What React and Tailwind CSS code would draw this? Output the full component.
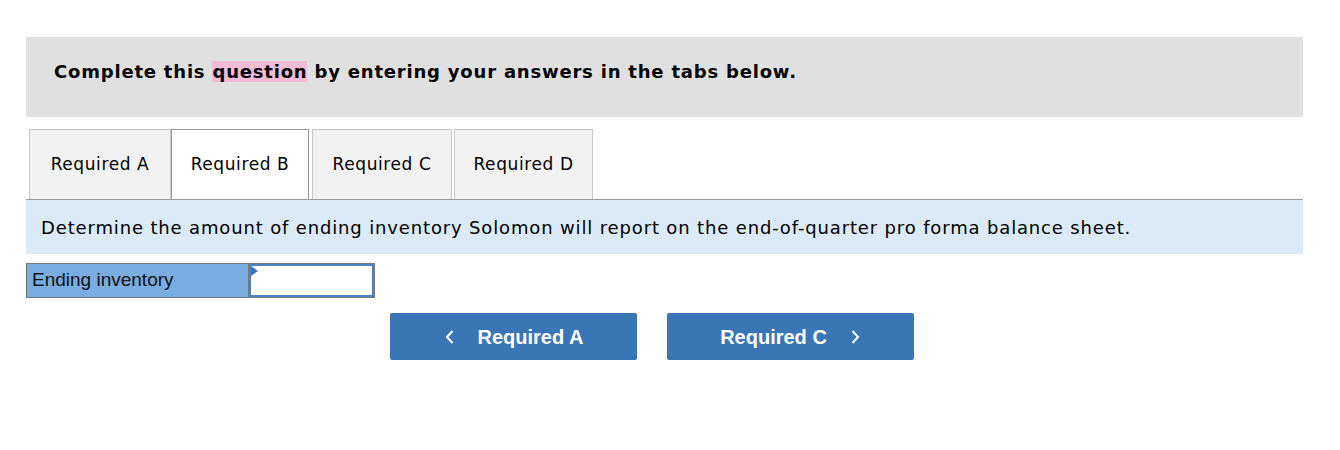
export default function App() {
  const tabs = [
    { label: 'Required A', cls: 'w-[142px] mr-0' },
    { label: 'Required B', cls: 'w-[138px] mr-[3px]' },
    { label: 'Required C', cls: 'w-[140px] mr-[2px]' },
    { label: 'Required D', cls: 'w-[139px] mr-0' },
  ];

  return (
    <div className="w-[1340px] h-[450px] bg-white pt-[37px] pl-[26px] pr-[37px] font-['DejaVu_Sans',Verdana,sans-serif]">
      {/* Instruction banner */}
      <div className="h-[80px] bg-[#e0e0e0] flex items-center pl-[28px] pb-[12px]">
        <p className="text-[18px] tracking-[0.8px] font-bold text-black">
          Complete this <span className="bg-[#f0bcd6]">question</span> by entering your answers in the tabs below.
        </p>
      </div>

      {/* Tabs */}
      <div className="mt-[12px] flex border-b border-[#999] pl-[3px]">
        {tabs.map((t, i) => (
          <div
            key={t.label}
            className={
              i === 1
                ? `${t.cls} h-[70px] -mb-px bg-white border border-[#999] border-b-0 flex items-center justify-center text-[17px] tracking-[0.6px] text-black`
                : `${t.cls} h-[70px] bg-[#f2f2f2] border border-[#c8c8c8] border-b-0 flex items-center justify-center text-[17px] tracking-[0.6px] text-black`
            }
          >
            {t.label}
          </div>
        ))}
      </div>

      {/* Question */}
      <div className="h-[54px] bg-[#dbeaf8] flex items-center pl-[15px] pt-[1px]">
        <p className="text-[18px] tracking-[0.85px] text-black">
          Determine the amount of ending inventory Solomon will report on the end-of-quarter pro forma balance sheet.
        </p>
      </div>

      {/* Answer row */}
      <div className="mt-[9px] flex h-[35px]">
        <div className="w-[223px] bg-[#79ace1] border border-[#777] flex items-center pl-[5px] font-['Liberation_Sans',Arial,sans-serif] text-[19px] text-[#111]">
          Ending inventory
        </div>
        <div className="w-[126px] border border-l-0 border-[#777]">
          <div className="relative h-full border-2 border-[#4a82c4] bg-white">
            <div className="absolute left-0 top-0 w-0 h-0 border-t-[5px] border-b-[5px] border-l-[7px] border-t-transparent border-b-transparent border-l-[#3a75b5]" />
            <input className="w-full h-full outline-none bg-transparent px-2 text-[16px]" />
          </div>
        </div>
      </div>

      {/* Navigation */}
      <div className="mt-[15px] flex gap-[30px] pl-[364px] font-['Liberation_Sans',Arial,sans-serif]">
        <button className="w-[247px] h-[47px] bg-[#3a75b5] rounded-[2px] text-white font-bold text-[20px] flex items-center justify-center gap-[22px]">
          <svg width="12" height="16" viewBox="0 0 12 16" fill="none">
            <path d="M8.5 2L3 8l5.5 6" stroke="white" strokeWidth="2" />
          </svg>
          <span>Required A</span>
        </button>
        <button className="w-[247px] h-[47px] bg-[#3a75b5] rounded-[2px] text-white font-bold text-[20px] flex items-center justify-center gap-[22px]">
          <span>Required C</span>
          <svg width="12" height="16" viewBox="0 0 12 16" fill="none">
            <path d="M3.5 2L9 8l-5.5 6" stroke="white" strokeWidth="2" />
          </svg>
        </button>
      </div>
    </div>
  );
}
